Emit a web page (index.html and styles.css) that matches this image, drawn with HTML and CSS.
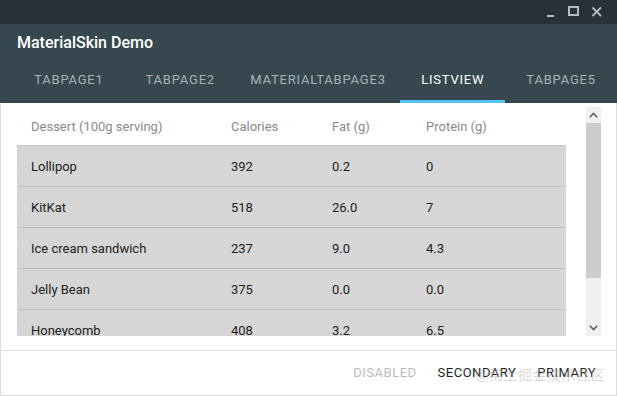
FILE: index.html
```html
<!DOCTYPE html>
<html>
<head>
<meta charset="utf-8">
<link rel="stylesheet" href="styles.css">
</head>
<body>
<div class="window">
  <div class="titlebar">
    <svg class="ctl" width="12" height="12" viewBox="0 0 12 12"><rect x="2" y="9" width="7" height="2" fill="#b4bcc0"/></svg>
    <svg class="ctl" width="12" height="12" viewBox="0 0 12 12"><rect x="1" y="1" width="9" height="8" fill="none" stroke="#b4bcc0" stroke-width="2"/></svg>
    <svg class="ctl" width="12" height="12" viewBox="0 0 12 12"><path d="M1.5 1.5 L10 10 M10 1.5 L1.5 10" stroke="#b4bcc0" stroke-width="1.8"/></svg>
  </div>
  <div class="header">
    <div class="title">MaterialSkin Demo</div>
    <div class="tabs">
      <div class="tab t1">TABPAGE1</div>
      <div class="tab t2">TABPAGE2</div>
      <div class="tab t3">MATERIALTABPAGE3</div>
      <div class="tab t4 active">LISTVIEW</div>
      <div class="tab t5">TABPAGE5</div>
    </div>
  </div>
  <div class="body">
    <div class="content">
      <div class="list">
        <div class="table">
          <div class="row head"><span class="c1">Dessert (100g serving)</span><span class="c2">Calories</span><span class="c3">Fat (g)</span><span class="c4">Protein (g)</span></div>
          <div class="row"><span class="c1">Lollipop</span><span class="c2">392</span><span class="c3">0.2</span><span class="c4">0</span></div>
          <div class="row"><span class="c1">KitKat</span><span class="c2">518</span><span class="c3">26.0</span><span class="c4">7</span></div>
          <div class="row"><span class="c1">Ice cream sandwich</span><span class="c2">237</span><span class="c3">9.0</span><span class="c4">4.3</span></div>
          <div class="row"><span class="c1">Jelly Bean</span><span class="c2">375</span><span class="c3">0.0</span><span class="c4">0.0</span></div>
          <div class="row"><span class="c1">Honeycomb</span><span class="c2">408</span><span class="c3">3.2</span><span class="c4">6.5</span></div>
        </div>
        <div class="scrollbar">
          <div class="sbtn"><svg width="9" height="6" viewBox="0 0 9 6"><path d="M0.8 5.2 L4.5 1.5 L8.2 5.2" fill="none" stroke="#606060" stroke-width="1.6"/></svg></div>
          <div class="thumb"></div>
          <div class="track"></div>
          <div class="sbtn"><svg width="9" height="6" viewBox="0 0 9 6"><path d="M0.8 0.8 L4.5 4.5 L8.2 0.8" fill="none" stroke="#606060" stroke-width="1.6"/></svg></div>
        </div>
      </div>
    </div>
    <div class="footer">
      <span class="btn disabled">DISABLED</span>
      <span class="btn">SECONDARY</span>
      <span class="btn">PRIMARY</span>
      <span class="watermark">@稀土掘金技术社区</span>
    </div>
  </div>
</div>
</body>
</html>
```

FILE: styles.css
```css
html, body {
  margin: 0;
  padding: 0;
  width: 617px;
  height: 396px;
  overflow: hidden;
  background: #ffffff;
  font-family: Roboto, "Noto Sans", sans-serif;
}
.window {
  width: 617px;
  height: 396px;
  display: flex;
  flex-direction: column;
}
.titlebar {
  height: 24px;
  background: #263238;
  display: flex;
  justify-content: flex-end;
  align-items: center;
  gap: 11px;
  padding-right: 14px;
}
.ctl { display: block; }
.header {
  background: #37474f;
  height: 79px;
  display: flex;
  flex-direction: column;
}
.title {
  color: #ffffff;
  font-size: 16px;
  font-weight: 500;
  padding-left: 17px;
  height: 38px;
  line-height: 38px;
}
.tabs {
  display: flex;
  padding-left: 13px;
  height: 41px;
}
.tab {
  box-sizing: border-box;
  text-align: center;
  font-size: 13px;
  font-weight: 400;
  letter-spacing: 0.8px;
  color: #a9b1b5;
  line-height: 36px;
  border-bottom: 3px solid transparent;
  height: 41px;
}
.t1 { width: 112px; }
.t2 { width: 111px; }
.t3 { width: 165px; }
.t4 { width: 105px; }
.t5 { width: 112px; }
.tab.active {
  color: #ffffff;
  border-bottom-color: #4fc3f7;
}
.body {
  flex: 1;
  display: flex;
  flex-direction: column;
  border: 1px solid #dcdcdc;
  border-top: none;
  position: relative;
}
.content {
  height: 248px;
  box-sizing: border-box;
  padding: 4px 15px 0 16px;
  border-bottom: 1px solid #dedede;
}
.list {
  height: 229px;
  display: flex;
  overflow: hidden;
}
.table {
  width: 549px;
  margin-right: 20px;
  font-size: 13px;
}
.row {
  display: flex;
  height: 40px;
  align-items: center;
  background: #d6d6d6;
  border-bottom: 1px solid #c0c0c0;
  color: #222222;
}
.row.head {
  height: 38px;
  background: #ffffff;
  color: #8a8a8a;
  border-bottom-color: #c8c8c8;
}
.row span { box-sizing: border-box; padding-left: 14px; }
.c1 { width: 200px; }
.c2 { width: 101px; }
.c3 { width: 94px; }
.c4 { flex: 1; }
.scrollbar {
  width: 15px;
  display: flex;
  flex-direction: column;
  background: #f0f0f0;
}
.sbtn {
  height: 16px;
  display: flex;
  align-items: center;
  justify-content: center;
}
.sbtn svg { display: block; }
.thumb {
  height: 155px;
  background: #cdcdcd;
}
.track { flex: 1; }
.footer {
  flex: 1;
  display: flex;
  justify-content: flex-end;
  align-items: center;
  gap: 21px;
  padding-right: 20px;
  padding-bottom: 2px;
}
.btn {
  font-size: 13px;
  font-weight: 400;
  letter-spacing: 0.5px;
  color: #1e1e1e;
}
.btn.disabled { color: #bcbcbc; }
.watermark {
  position: absolute;
  right: 11px;
  bottom: 11px;
  font-family: "Noto Sans CJK SC", sans-serif;
  font-size: 14px;
  color: rgba(185, 185, 185, 0.55);
  letter-spacing: 0.5px;
}
```
